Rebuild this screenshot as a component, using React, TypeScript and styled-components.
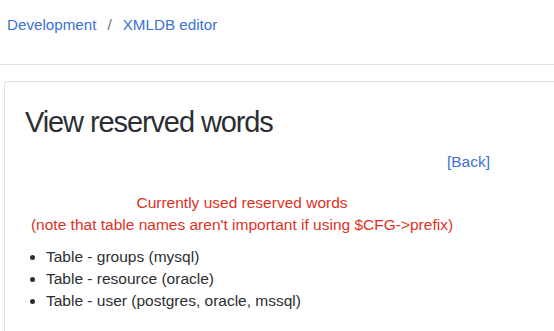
import React from 'react';
import styled, { createGlobalStyle } from 'styled-components';

const GlobalStyle = createGlobalStyle`
  html, body {
    margin: 0;
    padding: 0;
    background: #ffffff;
  }
  body {
    font-family: "Liberation Sans", Arial, sans-serif;
    color: #1d2125;
    overflow: hidden;
  }
`;

const Page = styled.div`
  width: 570px;
  height: 331px;
  overflow: hidden;
`;

const HeaderBar = styled.header`
  height: 65px;
  border-bottom: 1px solid #dee2e6;
  display: flex;
  align-items: flex-start;
  padding: 16px 0 0 7px;
  box-sizing: border-box;
`;

const Crumbs = styled.nav`
  display: flex;
  align-items: center;
  font-size: 15.2px;
  line-height: 18px;
  gap: 8px;
`;

const CrumbLink = styled.a`
  color: #3d72d2;
  text-decoration: none;
`;

const Separator = styled.span`
  color: #6a737b;
  padding: 0 3px;
`;

const Card = styled.section`
  margin: 16px 0 0 4px;
  border: 1px solid #dee2e6;
  border-right: none;
  border-radius: 4px 0 0 4px;
  padding: 22px 0 30px 20px;
  min-height: 240px;
`;

const Title = styled.h2`
  margin: 0;
  font-size: 29px;
  letter-spacing: -1.1px;
  font-weight: 400;
  color: #2b2f33;
  line-height: 36px;
`;

const BackRow = styled.div`
  width: 465px;
  text-align: right;
  margin-top: 13px;
  font-size: 15.5px;
`;

const BackLink = styled.a`
  color: #3d72d2;
  text-decoration: none;
`;

const Notice = styled.div`
  width: 434px;
  text-align: center;
  color: #e0311f;
  font-size: 15.5px;
  line-height: 22px;
  margin-top: 21px;
`;

const WordList = styled.ul`
  margin: 10px 0 0;
  padding-left: 21px;
  font-size: 15.5px;
  line-height: 22px;
  color: #2b2f33;
`;

const words = [
  'Table - groups (mysql)',
  'Table - resource (oracle)',
  'Table - user (postgres, oracle, mssql)',
];

export default function App() {
  return (
    <Page>
      <GlobalStyle />
      <HeaderBar>
        <Crumbs>
          <CrumbLink href="#">Development</CrumbLink>
          <Separator>/</Separator>
          <CrumbLink href="#">XMLDB editor</CrumbLink>
        </Crumbs>
      </HeaderBar>
      <Card>
        <Title>View reserved words</Title>
        <BackRow>
          <BackLink href="#">[Back]</BackLink>
        </BackRow>
        <Notice>
          <div>Currently used reserved words</div>
          <div>(note that table names aren't important if using $CFG-&gt;prefix)</div>
        </Notice>
        <WordList>
          {words.map((w) => (
            <li key={w}>{w}</li>
          ))}
        </WordList>
      </Card>
    </Page>
  );
}
